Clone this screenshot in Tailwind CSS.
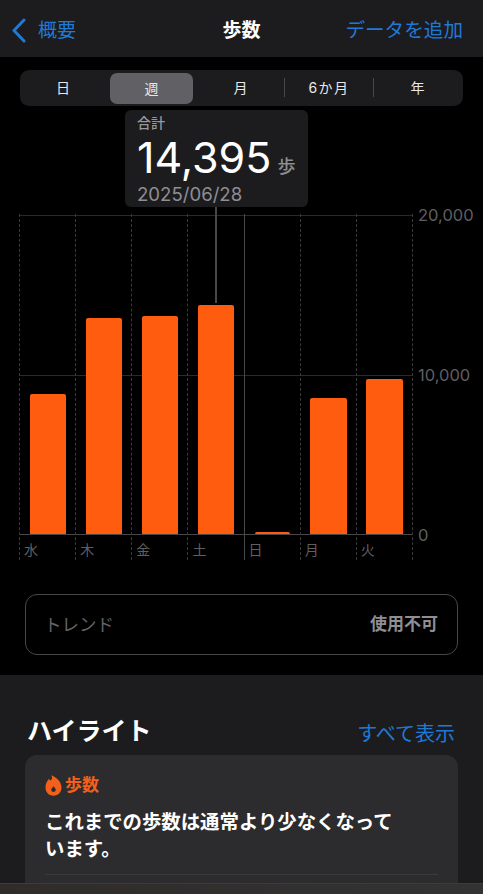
<!DOCTYPE html>
<html lang="ja">
<head>
  <meta charset="UTF-8">
  <title>歩数</title>
  <script src="https://cdn.jsdelivr.net/npm/@tailwindcss/browser@4"></script>
</head>
<body class="bg-black w-[483px] h-[894px] overflow-hidden relative text-white font-['Inter','Noto_Sans_CJK_JP',sans-serif]">
  <!-- Nav bar -->
  <div class="h-[57px] bg-[#1c1c1e] flex items-center justify-between pl-[11px] pr-[20px] pt-[5px]">
    <div class="flex items-center gap-[12px] text-[#2079d6] text-[19px]">
      <svg class="-mt-[2px]" width="15" height="25" viewBox="0 0 15 25" fill="none"><path d="M13 2 L3 12.5 L13 23" stroke="#2079d6" stroke-width="3" stroke-linecap="round" stroke-linejoin="round"/></svg>
      <span>概要</span>
    </div>
    <span class="absolute left-0 right-0 text-center text-[19px] font-semibold">歩数</span>
    <span class="text-[#2079d6] text-[19.6px]">データを追加</span>
  </div>

  <!-- Segmented control -->
  <div class="mt-[13px] mx-[20px] h-[36px] bg-[#1c1c1e] rounded-[9px] flex items-center text-[14px] text-[#e8e8e8] pb-[1px]">
    <div class="w-[86px] text-center">日</div>
    <div class="ml-[4px] w-[83px] h-[31px] mt-[1px] bg-[#616165] rounded-[7px] flex items-center justify-center">週</div>
    <div class="w-[91px] text-center pl-[4px]">月</div>
    <div class="w-[90px] text-center border-l border-r border-[#48484a] leading-[19px] tracking-[1.5px]">6か月</div>
    <div class="flex-1 text-center pr-[2px]">年</div>
  </div>

  <!-- Chart -->
  <div class="relative mt-[108px] ml-[19px] w-[394px]">
    <div class="absolute left-0 right-0 top-[1px] border-t border-[#2a2a2b]"></div>
    <div class="absolute left-0 right-0 top-[161px] border-t border-[#2a2a2b]"></div>
    <span class="absolute left-[399px] top-[-10px] text-[16.5px] text-[#5f5f62] leading-[22px]">20,000</span>
    <span class="absolute left-[399px] top-[150px] text-[16.5px] text-[#5f5f62] leading-[22px]">10,000</span>
    <span class="absolute left-[399px] top-[310px] text-[16.5px] text-[#5f5f62] leading-[22px]">0</span>

    <div class="relative grid grid-cols-7 h-[346px] border-r border-dashed border-[#3a3a3c]">
      <div class="border-l border-dashed border-[#3a3a3c] flex flex-col">
        <div class="h-[321px] border-b border-[#48484a] flex items-end justify-center"><div class="w-[36px] h-[140px] bg-[#ff5c10] rounded-t-[2px]"></div></div>
        <span class="pl-[4px] pt-[5px] text-[14px] leading-[20px] text-[#5f5f62]">水</span>
      </div>
      <div class="border-l border-dashed border-[#3a3a3c] flex flex-col">
        <div class="h-[321px] border-b border-[#48484a] flex items-end justify-center"><div class="w-[36px] h-[216px] bg-[#ff5c10] rounded-t-[2px]"></div></div>
        <span class="pl-[4px] pt-[5px] text-[14px] leading-[20px] text-[#5f5f62]">木</span>
      </div>
      <div class="border-l border-dashed border-[#3a3a3c] flex flex-col">
        <div class="h-[321px] border-b border-[#48484a] flex items-end justify-center"><div class="w-[36px] h-[218px] bg-[#ff5c10] rounded-t-[2px]"></div></div>
        <span class="pl-[4px] pt-[5px] text-[14px] leading-[20px] text-[#5f5f62]">金</span>
      </div>
      <div class="border-l border-dashed border-[#3a3a3c] flex flex-col">
        <div class="h-[321px] border-b border-[#48484a] flex items-end justify-center"><div class="w-[36px] h-[229px] bg-[#ff5c10] rounded-t-[2px]"></div></div>
        <span class="pl-[4px] pt-[5px] text-[14px] leading-[20px] text-[#5f5f62]">土</span>
      </div>
      <div class="border-l border-[#48484a] flex flex-col">
        <div class="h-[321px] border-b border-[#48484a] flex items-end justify-center"><div class="w-[35px] h-[2px] bg-[#ff5c10] rounded-t-[2px]"></div></div>
        <span class="pl-[4px] pt-[5px] text-[14px] leading-[20px] text-[#5f5f62]">日</span>
      </div>
      <div class="border-l border-dashed border-[#3a3a3c] flex flex-col">
        <div class="h-[321px] border-b border-[#48484a] flex items-end justify-center"><div class="w-[37px] h-[136px] bg-[#ff5c10] rounded-t-[2px]"></div></div>
        <span class="pl-[4px] pt-[5px] text-[14px] leading-[20px] text-[#5f5f62]">月</span>
      </div>
      <div class="border-l border-dashed border-[#3a3a3c] flex flex-col">
        <div class="h-[321px] border-b border-[#48484a] flex items-end justify-center"><div class="w-[37px] h-[155px] bg-[#ff5c10] rounded-t-[2px]"></div></div>
        <span class="pl-[4px] pt-[5px] text-[14px] leading-[20px] text-[#5f5f62]">火</span>
      </div>
    </div>
  </div>

  <!-- Tooltip over chart -->
  <div class="absolute left-[125px] top-[110px] w-[183px] h-[97px] bg-[#1c1c1e] rounded-[6px] pl-[12px] pt-[4px]">
    <div class="text-[14px] leading-[17px] text-[#98989d] font-medium">合計</div>
    <div class="flex items-baseline gap-[6px] mt-[3px]">
      <span class="text-[43px] leading-[46px]">14,395</span>
      <span class="text-[18px] leading-[22px] text-[#8e8e93] font-medium">歩</span>
    </div>
    <div class="text-[18.6px] leading-[22px] mt-[3px] text-[#8e8e93]">2025/06/28</div>
  </div>
  <div class="absolute left-[215px] top-[207px] w-[2px] h-[96px] bg-[#48484a]"></div>

  <!-- Trend card -->
  <div class="mt-[34px] mx-[25px] h-[61px] rounded-[12px] border border-[#48484a] flex items-center justify-between pl-[18px] pr-[19px] pt-[1px] text-[17.5px]">
    <span class="text-[#636366]">トレンド</span>
    <span class="text-[#8e8e93] font-semibold text-[17px]">使用不可</span>
  </div>

  <!-- Highlights -->
  <div class="mt-[20px] h-[219px] bg-[#1c1c1e] px-[25px]">
    <div class="flex items-end justify-between h-[72px] pl-[2px] pr-[3px]">
      <span class="text-[25px] font-bold leading-[32px]">ハイライト</span>
      <span class="text-[20px] leading-[26px] text-[#2079d6]">すべて表示</span>
    </div>
    <div class="mt-[8px] bg-[#2c2c2e] rounded-t-[12px] h-[140px] px-[20px] pt-[18px]">
      <div class="flex items-center gap-[3px] text-[#f2601c] text-[17px] font-bold leading-[24px]">
        <svg width="17" height="21" viewBox="0 0 17 21"><path fill-rule="evenodd" fill="#f2601c" d="M6.5 0.3 C7.5 3 7 5 5.2 5.6 C4.6 5.2 4.2 4.6 4 3.8 C1.8 6.2 0.5 9 0.5 12.5 C0.5 17.5 4 20.7 8.5 20.7 C13 20.7 16.5 17.5 16.5 12.5 C16.5 7.2 12 2.6 6.5 0.3 Z M8.5 17 C7.2 17 6.2 16 6.2 14.8 C6.2 13.6 7.6 12.6 8.6 11.2 C9.4 12.6 10.8 13.6 10.8 14.8 C10.8 16 9.8 17 8.5 17 Z"/></svg>
        <span>歩数</span>
      </div>
      <p class="mt-[12px] text-[19.4px] font-bold leading-[27px] w-[360px]">これまでの歩数は通常より少なくなっています。</p>
      <div class="mt-[11px] border-t border-[#3a3a3c]"></div>
    </div>
  </div>

  <!-- Bottom tab bar edge -->
  <div class="absolute left-0 right-0 bottom-0 h-[11px] bg-linear-to-r from-[#2f2c2a] to-[#333334] border-t border-[#3c3c3e]"></div>
</body>
</html>
